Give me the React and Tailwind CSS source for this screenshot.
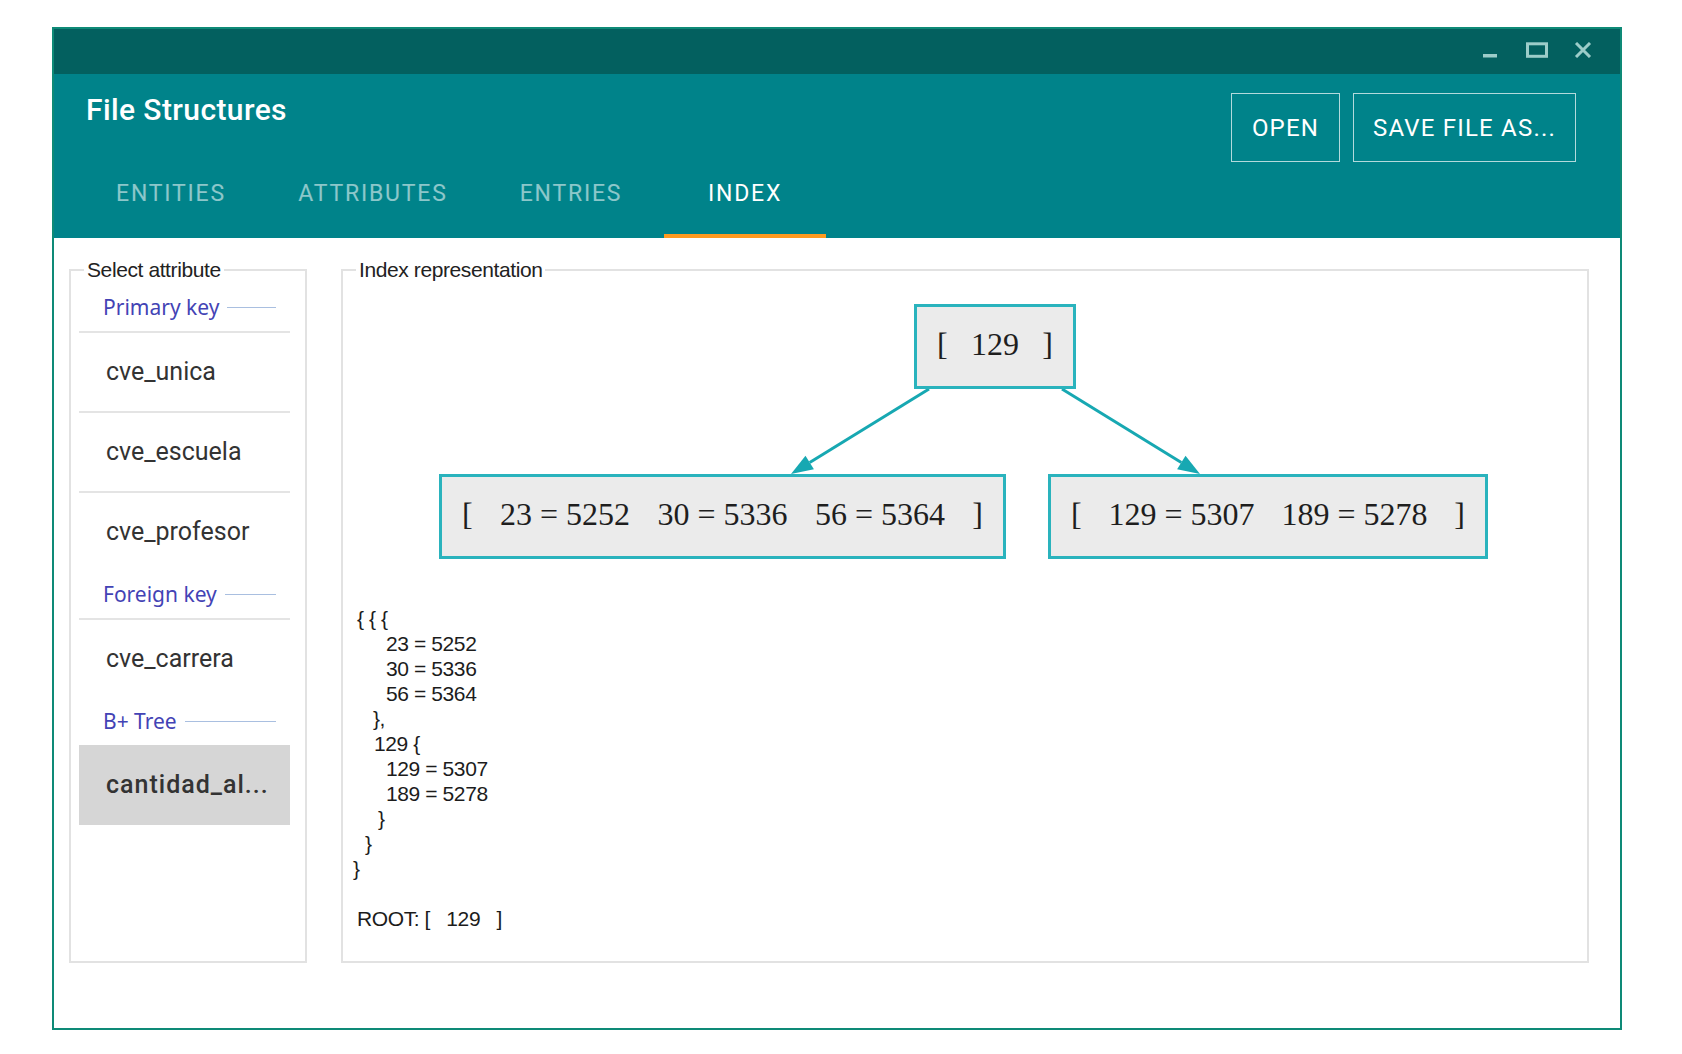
import React from "react";

const tabs = [
  { label: "ENTITIES", w: "w-[194px]" },
  { label: "ATTRIBUTES", w: "w-[210px]" },
  { label: "ENTRIES", w: "w-[186px]" },
  { label: "INDEX", w: "w-[162px]", active: true },
];

const narrow = { fontFamily: '"Liberation Sans", Arial, sans-serif' };

function GroupHeader({ label }) {
  return (
    <div className="h-[47px] flex items-center pl-[24px] pr-[14px] gap-[8px]">
      <span className="text-[21px] text-[#4343b5] leading-none" style={{ fontFamily: '"Noto Sans", sans-serif' }}>
        {label}
      </span>
      <div className="flex-1 h-px bg-[#a9bfe0]" />
    </div>
  );
}

function Item({ name, top, selected }) {
  return (
    <div
      className={
        "h-[80px] flex items-center pl-[27px] text-[25px] " +
        (top ? "border-t-2 border-[#e4e4e4] " : "") +
        (selected ? "bg-[#d6d6d6] tracking-[1px] font-medium text-[#333]" : "text-[#333]")
      }
      style={{ fontFamily: "Roboto, sans-serif" }}
    >
      {name}
    </div>
  );
}

function Node({ className, parts }) {
  return (
    <div
      className={
        "absolute bg-[#ebebeb] border-[3px] border-[#2ab3bd] flex items-center justify-between px-[20px] pb-[5px] text-[32px] text-[#1e1e1e] " +
        className
      }
      style={{ fontFamily: '"Liberation Serif", serif' }}
    >
      {parts.map((p, i) => (
        <span key={i} className="whitespace-pre">
          {p}
        </span>
      ))}
    </div>
  );
}

const lines = [
  ["pl-[4px]", "{ { {"],
  ["pl-[33px]", "23 = 5252"],
  ["pl-[33px]", "30 = 5336"],
  ["pl-[33px]", "56 = 5364"],
  ["pl-[20px]", "},"],
  ["pl-[21px]", "129 {"],
  ["pl-[33px]", "129 = 5307"],
  ["pl-[33px]", "189 = 5278"],
  ["pl-[25px]", "}"],
  ["pl-[12px]", "}"],
  ["pl-0", "}"],
];

export default function App() {
  return (
    <div className="w-full h-[1054px] bg-white pt-[27px] pl-[52px]">
      <div className="w-[1570px] h-[1003px] border-2 border-[#0e8a77] flex flex-col">
        {/* title bar */}
        <div className="h-[45px] bg-[#03605f] flex justify-end items-start pt-[13px] pr-[27px]">
          <svg width="14" height="16" className="mr-[29px]">
            <rect x="0" y="12" width="14" height="3.5" fill="#9ccdc9" />
          </svg>
          <svg width="22" height="16" className="mr-[25px]">
            <rect x="1.5" y="1.8" width="19" height="12.5" fill="none" stroke="#9ccdc9" strokeWidth="3" />
          </svg>
          <svg width="20" height="16">
            <path d="M3 1 L17 15 M17 1 L3 15" stroke="#9ccdc9" strokeWidth="3" />
          </svg>
        </div>

        {/* header */}
        <div className="h-[164px] bg-[#00838a] flex flex-col justify-between" style={{ fontFamily: "Roboto, sans-serif" }}>
          <div className="flex items-start justify-between pt-[19px] pl-[32px] pr-[44px]">
            <div className="-mt-[1px] text-[30px] leading-[36px] tracking-[0.4px] font-medium text-white">File Structures</div>
            <div className="flex gap-[13px]">
              <button className="w-[109px] h-[69px] border border-white/70 text-white text-[24px] tracking-[1.2px]">OPEN</button>
              <button className="w-[223px] h-[69px] border border-white/70 text-white text-[24px] tracking-[1.2px]">SAVE FILE AS...</button>
            </div>
          </div>
          <div className="flex pl-[20px]">
            {tabs.map((t) => (
              <div
                key={t.label}
                className={
                  t.w +
                  " h-[64px] flex justify-center pt-[7px] border-b-4 text-[23px] leading-[26px] tracking-[1.8px] " +
                  (t.active ? "border-[#ff9a1f] text-white" : "border-transparent text-white/55")
                }
              >
                {t.label}
              </div>
            ))}
          </div>
        </div>

        {/* body */}
        <div className="flex-1 flex pt-[19px] pl-[15px] gap-[34px]">
          <fieldset className="w-[238px] h-[706px] border-2 border-[#e2e2e2]">
            <legend className="ml-[13px] px-[3px] text-[21px] leading-[26px] tracking-[-0.4px] text-[#222]" style={narrow}>
              Select attribute
            </legend>
            <div className="mt-[1px] ml-[8px] mr-[15px]">
              <GroupHeader label="Primary key" />
              <Item name="cve_unica" top />
              <Item name="cve_escuela" top />
              <Item name="cve_profesor" top />
              <GroupHeader label="Foreign key" />
              <Item name="cve_carrera" top />
              <GroupHeader label="B+ Tree" />
              <Item name="cantidad_al..." selected />
            </div>
          </fieldset>

          <fieldset className="w-[1248px] h-[706px] border-2 border-[#e2e2e2]">
            <legend className="ml-[13px] px-[3px] text-[21px] leading-[26px] tracking-[-0.4px] text-[#222]" style={narrow}>
              Index representation
            </legend>
            <div className="relative h-[276px]">
              <svg className="absolute left-0 top-0" width="1246" height="276">
                <line x1="586" y1="106" x2="466.7" y2="179.5" stroke="#17a8b2" strokeWidth="3" />
                <polygon points="448,191 470.9,186.3 462.5,172.7" fill="#17a8b2" />
                <line x1="719" y1="106" x2="838.3" y2="179.5" stroke="#17a8b2" strokeWidth="3" />
                <polygon points="857,191 834.1,186.3 842.5,172.7" fill="#17a8b2" />
              </svg>
              <Node className="left-[571px] top-[21px] w-[162px] h-[85px]" parts={["[", "129", "]"]} />
              <Node className="left-[96px] top-[191px] w-[567px] h-[85px]" parts={["[", "23 = 5252", "30 = 5336", "56 = 5364", "]"]} />
              <Node className="left-[705px] top-[191px] w-[440px] h-[85px]" parts={["[", "129 = 5307", "189 = 5278", "]"]} />
            </div>
            <div className="mt-[47px] pl-[10px] text-[21px] leading-[25px] tracking-[-0.4px] text-[#1c1c1c]" style={narrow}>
              {lines.map(([pl, txt], i) => (
                <div key={i} className={pl + " whitespace-pre"}>
                  {txt}
                </div>
              ))}
              <div className="h-[25px]" />
              <div className="pl-[4px] whitespace-pre">ROOT: [   129   ]</div>
            </div>
          </fieldset>
        </div>
      </div>
    </div>
  );
}
